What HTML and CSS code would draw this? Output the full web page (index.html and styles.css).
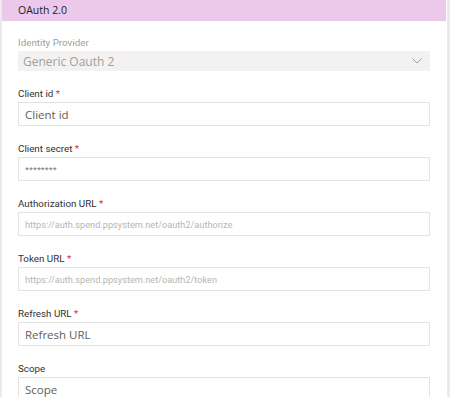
FILE: index.html
```html
<!DOCTYPE html>
<html>
<head>
<meta charset="utf-8">
<link rel="stylesheet" href="styles.css">
</head>
<body>
<div class="panel">
  <div class="header">OAuth 2.0</div>
  <div class="form">
    <div class="field">
      <div class="label disabled">Identity Provider</div>
      <div class="select">
        <span>Generic Oauth 2</span>
        <svg class="chev" width="10" height="6" viewBox="0 0 10 6"><path d="M0.5 0.5 L5 5 L9.5 0.5" fill="none" stroke="#a19f9d" stroke-width="1"/></svg>
      </div>
    </div>
    <div class="field">
      <div class="label">Client id <span class="req">*</span></div>
      <div class="input dark">Client id</div>
    </div>
    <div class="field">
      <div class="label">Client secret <span class="req">*</span></div>
      <div class="input secret">********</div>
    </div>
    <div class="field">
      <div class="label">Authorization URL <span class="req">*</span></div>
      <div class="input light">https://auth.spend.ppsystem.net/oauth2/authorize</div>
    </div>
    <div class="field">
      <div class="label">Token URL <span class="req">*</span></div>
      <div class="input light">https://auth.spend.ppsystem.net/oauth2/token</div>
    </div>
    <div class="field">
      <div class="label">Refresh URL <span class="req">*</span></div>
      <div class="input dark">Refresh URL</div>
    </div>
    <div class="field">
      <div class="label">Scope</div>
      <div class="input dark">Scope</div>
    </div>
  </div>
</div>
</body>
</html>
```
FILE: styles.css
```css
html, body {
  margin: 0;
  padding: 0;
  background: #ebebeb;
  height: 100%;
  overflow: hidden;
}
body {
  font-family: "Open Sans", "Noto Sans", sans-serif;
}
.panel {
  margin-left: 2px;
  width: 445px;
  min-height: 397px;
  background: #ffffff;
}
.header {
  width: 444px;
  height: 21px;
  line-height: 21px;
  background: #ecc8ea;
  color: #201f1e;
  font-size: 10.5px;
  padding-left: 16px;
  box-sizing: border-box;
}
.form {
  display: flex;
  flex-direction: column;
  gap: 16px;
  padding: 15px 16px 0 16px;
}
.field {
  display: flex;
  flex-direction: column;
}
.label {
  font-family: Roboto, "Open Sans", sans-serif;
  font-size: 9.8px;
  line-height: 14px;
  height: 14px;
  margin-bottom: 1px;
  color: #323130;
}
.label.disabled {
  color: #a19f9d;
}
.req {
  color: #d13438;
}
.select {
  height: 20px;
  width: 412px;
  background: #f3f2f1;
  display: flex;
  align-items: center;
  justify-content: space-between;
  padding: 0 8px 0 5px;
  box-sizing: border-box;
  font-size: 12px;
  color: #a19f9d;
}
.chev {
  display: block;
}
.input {
  height: 24px;
  width: 412px;
  box-sizing: border-box;
  border: 1px solid #e4e3e2;
  padding: 0 6px;
  display: flex;
  align-items: center;
  font-size: 11.5px;
  white-space: nowrap;
  overflow: hidden;
}
.input.dark {
  color: #605e5c;
}
.input.light {
  font-family: Roboto, "Open Sans", sans-serif;
  color: #b8b6b4;
  font-size: 9.2px;
}
.input.secret {
  color: #605e5c;
  font-size: 7.2px;
  letter-spacing: 0;
}
```
